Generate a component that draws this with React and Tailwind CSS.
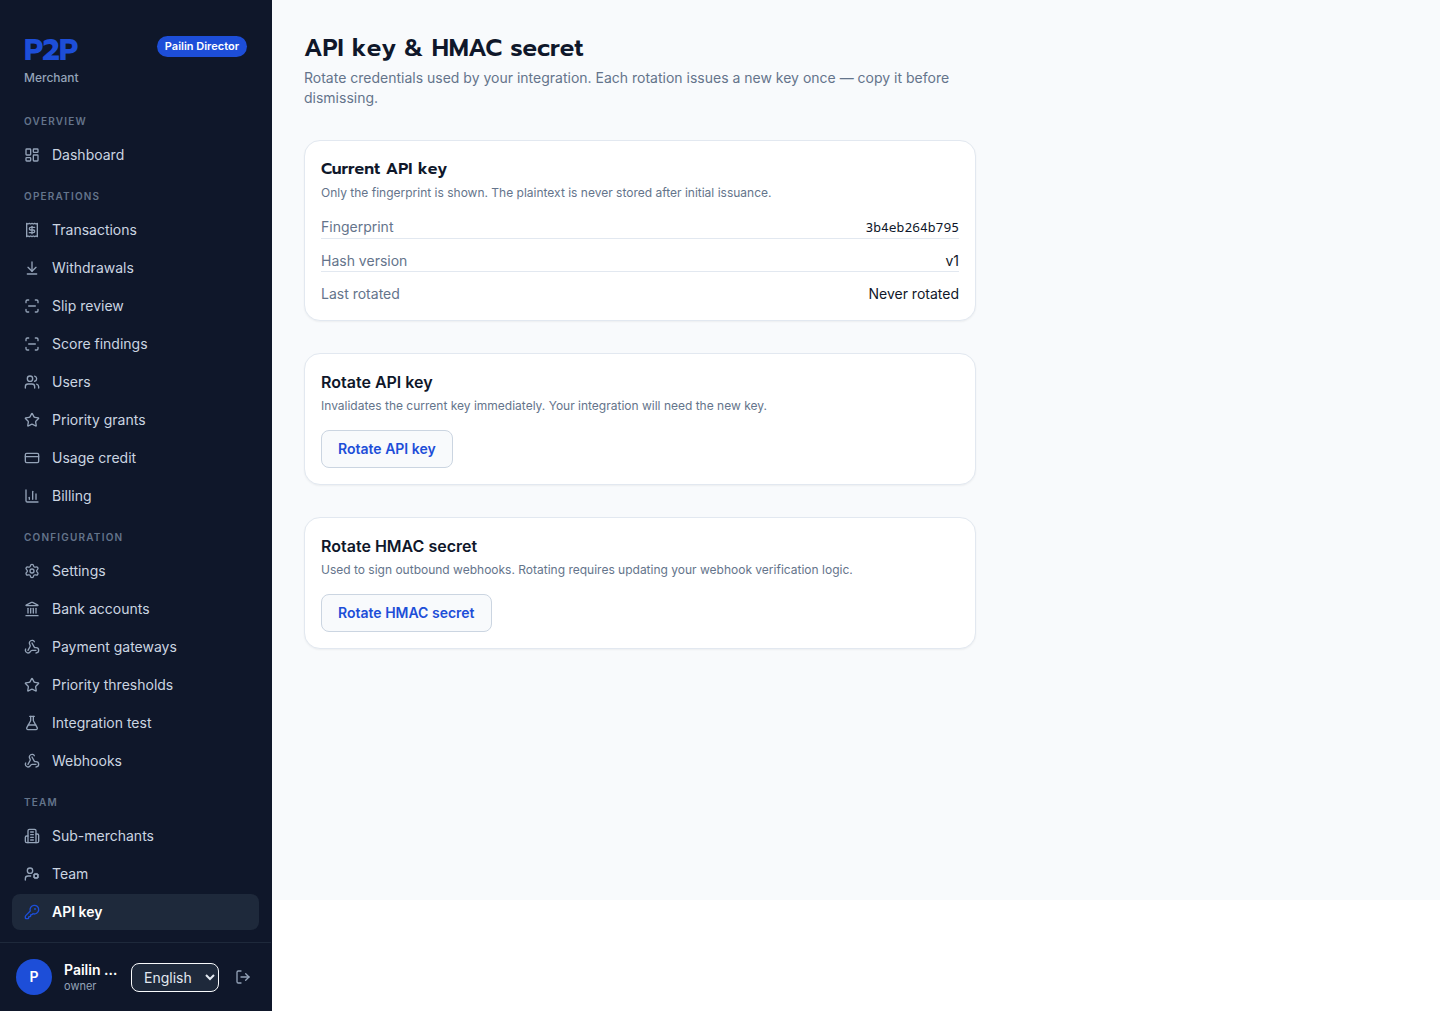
import {
  ArrowDownToLine,
  ChartColumn,
  CreditCard,
  FlaskConical,
  KeyRound,
  Landmark,
  LayoutDashboard,
  LogOut,
  Receipt,
  ScanLine,
  Settings,
  Star,
  UserCog,
  Users,
  Webhook,
} from 'lucide-react';

// Office building with four floors
function BuildingIcon({ className }) {
  return (
    <svg
      className={className}
      viewBox="0 0 24 24"
      fill="none"
      stroke="currentColor"
      strokeWidth="2"
      strokeLinecap="round"
      strokeLinejoin="round"
      aria-hidden="true"
    >
      <path d="M6 22V4a2 2 0 0 1 2-2h8a2 2 0 0 1 2 2v18Z" />
      <path d="M6 12H4a2 2 0 0 0-2 2v6a2 2 0 0 0 2 2h2" />
      <path d="M18 9h2a2 2 0 0 1 2 2v9a2 2 0 0 1-2 2h-2" />
      <path d="M10 6h4M10 10h4M10 14h4M10 18h4" />
    </svg>
  );
}

const NAV_GROUPS = [
  {
    label: 'Overview',
    items: [{ name: 'Dashboard', icon: LayoutDashboard }],
  },
  {
    label: 'Operations',
    items: [
      { name: 'Transactions', icon: Receipt },
      { name: 'Withdrawals', icon: ArrowDownToLine },
      { name: 'Slip review', icon: ScanLine },
      { name: 'Score findings', icon: ScanLine },
      { name: 'Users', icon: Users },
      { name: 'Priority grants', icon: Star },
      { name: 'Usage credit', icon: CreditCard },
      { name: 'Billing', icon: ChartColumn },
    ],
  },
  {
    label: 'Configuration',
    items: [
      { name: 'Settings', icon: Settings },
      { name: 'Bank accounts', icon: Landmark },
      { name: 'Payment gateways', icon: Webhook },
      { name: 'Priority thresholds', icon: Star },
      { name: 'Integration test', icon: FlaskConical },
      { name: 'Webhooks', icon: Webhook },
    ],
  },
  {
    label: 'Team',
    items: [
      { name: 'Sub-merchants', icon: BuildingIcon },
      { name: 'Team', icon: UserCog },
      { name: 'API key', icon: KeyRound, active: true },
    ],
  },
];

function NavItem({ name, icon: Icon, active }) {
  return (
    <li>
      <a
        href="#"
        aria-current={active ? 'page' : undefined}
        className={`flex h-9 items-center gap-3 rounded-lg px-3 text-sm ${
          active ? 'bg-[#1e293b] font-semibold text-white' : 'text-[#cbd5e1]'
        }`}
      >
        <Icon className={`size-4 shrink-0 ${active ? 'text-[#1d4ed8]' : 'text-[#94a3b8]'}`} />
        {name}
      </a>
    </li>
  );
}

function Sidebar() {
  return (
    <aside className="flex w-[272px] shrink-0 flex-col border-r border-[#0f172a] bg-[#0f172a]">
      <div className="flex items-start justify-between px-6 pt-8 pb-4">
        <div>
          <div className="font-['Prompt','Open_Sans',sans-serif] text-3xl leading-9 font-bold tracking-tight text-[#1d4ed8]">
            P2P
          </div>
          <div className="mt-0.5 text-xs font-medium text-[#94a3b8]">Merchant</div>
        </div>
        <span className="mt-1 rounded-full bg-[#1d4ed8] px-2 text-[11px] leading-[21px] font-semibold text-white">
          Pailin Director
        </span>
      </div>

      <nav className="flex flex-1 flex-col gap-4 p-3">
        {NAV_GROUPS.map((group) => (
          <div key={group.label}>
            <h2 className="mb-2 px-3 text-[10px] leading-[15px] font-semibold tracking-[0.12em] text-[#64748b] uppercase">
              {group.label}
            </h2>
            <ul className="flex flex-col gap-0.5">
              {group.items.map((item) => (
                <NavItem key={item.name} {...item} />
              ))}
            </ul>
          </div>
        ))}
      </nav>

      {/* Signed-in user */}
      <div className="flex items-center gap-3 border-t border-[#1e293b] p-4">
        <div className="flex size-9 shrink-0 items-center justify-center rounded-full bg-[#1d4ed8] text-sm font-semibold text-white">
          P
        </div>
        <div className="min-w-0 flex-1">
          <div className="truncate text-sm leading-[18px] font-semibold text-white">
            Pailin Director
          </div>
          <div className="text-[11px] leading-[14px] text-[#94a3b8]">owner</div>
        </div>
        <select
          aria-label="Language"
          defaultValue="en"
          className="h-[29px] w-[88px] shrink-0 rounded-lg border border-[#f8fafc] bg-[#1e293b] px-2 text-sm text-[#e2e8f0]"
        >
          <option value="en">English</option>
          <option value="th">ไทย</option>
        </select>
        <button type="button" aria-label="Log out" className="shrink-0 p-1 text-[#94a3b8]">
          <LogOut className="size-4" />
        </button>
      </div>
    </aside>
  );
}

function Card({ children }) {
  return (
    <section className="rounded-2xl border border-[#e2e8f0] bg-white p-4 shadow-xs">
      {children}
    </section>
  );
}

function RotateCard({ title, description }) {
  return (
    <Card>
      <h2 className="text-base font-semibold">{title}</h2>
      <p className="mt-1 text-xs text-[#64748b]">{description}</p>
      <button
        type="button"
        className="mt-4 rounded-lg border border-[#cbd5e1] bg-[#f8fafc] px-4 py-2 text-sm font-semibold text-[#1d4ed8]"
      >
        {title}
      </button>
    </Card>
  );
}

export default function App() {
  return (
    <div className="flex min-h-screen bg-white font-['Inter',sans-serif] text-[#0f172a]">
      <Sidebar />
      <main className="min-h-[900px] flex-1 self-start bg-[#f8fafc] p-8">
        <div className="flex max-w-2xl flex-col gap-8">
          <header>
            <h1 className="font-['Prompt','Open_Sans',sans-serif] text-2xl font-semibold">
              API key &amp; HMAC secret
            </h1>
            <p className="mt-1 text-sm text-[#64748b]">
              Rotate credentials used by your integration. Each rotation issues a new key once —
              copy it before dismissing.
            </p>
          </header>

          <Card>
            <h2 className="font-['Prompt','Open_Sans',sans-serif] text-base font-semibold">
              Current API key
            </h2>
            <p className="mt-1 text-xs text-[#64748b]">
              Only the fingerprint is shown. The plaintext is never stored after initial issuance.
            </p>
            <dl className="mt-4 flex flex-col gap-3 text-sm">
              <div className="flex items-baseline justify-between border-b border-[#e2e8f0]">
                <dt className="text-[#64748b]">Fingerprint</dt>
                <dd className="font-['Noto_Sans_Mono','DejaVu_Sans_Mono',monospace] text-[13px] leading-[21px]">
                  3b4eb264b795
                </dd>
              </div>
              <div className="flex items-baseline justify-between border-b border-[#e2e8f0]">
                <dt className="text-[#64748b]">Hash version</dt>
                <dd>v1</dd>
              </div>
              <div className="flex items-baseline justify-between">
                <dt className="text-[#64748b]">Last rotated</dt>
                <dd>Never rotated</dd>
              </div>
            </dl>
          </Card>

          <RotateCard
            title="Rotate API key"
            description="Invalidates the current key immediately. Your integration will need the new key."
          />
          <RotateCard
            title="Rotate HMAC secret"
            description="Used to sign outbound webhooks. Rotating requires updating your webhook verification logic."
          />
        </div>
      </main>
    </div>
  );
}
